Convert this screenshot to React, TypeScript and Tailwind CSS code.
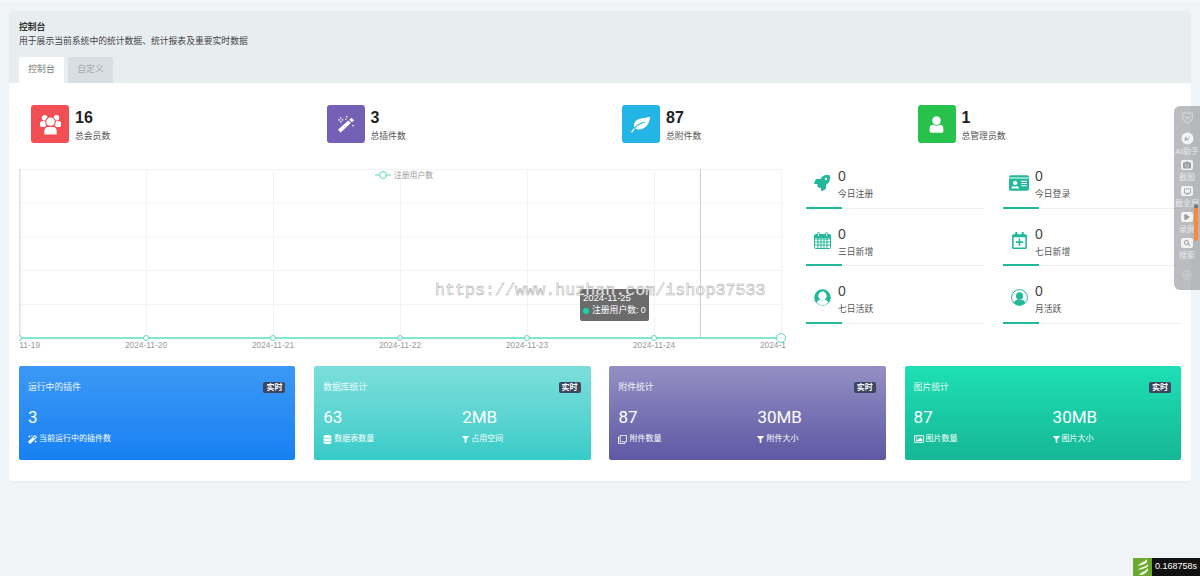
import React from "react";
import {
  FaMagic,
  FaRocket,
  FaIdCard,
  FaRegCalendarPlus,
  FaDatabase,
  FaFilter,
  FaRegClone,
  FaRegImage,
  FaCamera,
  FaDesktop,
  FaPlay,
  FaSearch,
} from "react-icons/fa";

const font = "font-['Liberation_Sans','Noto_Sans_CJK_SC',sans-serif]";

function UsersIcon() {
  return (
    <svg width="21" height="21" viewBox="0 0 20 20" fill="#fff">
      <circle cx="4.4" cy="3.6" r="2.7" />
      <circle cx="15.6" cy="3.6" r="2.7" />
      <rect x="0" y="6.8" width="6" height="5.6" rx="1.8" />
      <rect x="14" y="6.8" width="6" height="5.6" rx="1.8" />
      <circle cx="10" cy="7.4" r="4.6" stroke="#f44e55" strokeWidth="1" />
      <path d="M3.6 20 v-3.6 c0-3 2-4.6 3.6-4.6 h5.6 c1.6 0 3.6 1.6 3.6 4.6 V20 z" stroke="#f44e55" strokeWidth="1" />
    </svg>
  );
}

function WandIcon() {
  return (
    <svg width="18" height="18" viewBox="0 0 20 20" fill="#fff">
      <path d="M1 16.5 L12.6 6.2 L15.4 9 L4 19.5 Z" />
      <path d="M13.6 5.2 L16 3 L19 6 L16.4 8 Z" />
      <rect x="3.4" y="2.6" width="1.6" height="1.6" />
      <rect x="1.4" y="4.6" width="1.6" height="1.6" />
      <rect x="5.4" y="4.6" width="1.6" height="1.6" />
      <rect x="3.4" y="6.6" width="1.6" height="1.6" />
      <rect x="10" y="1" width="1.6" height="1.6" />
      <rect x="9" y="4" width="1.4" height="1.4" />
      <rect x="17" y="11" width="1.6" height="1.6" />
    </svg>
  );
}

function LeafIcon() {
  return (
    <svg width="20" height="17" viewBox="0 0 20 17" fill="#fff">
      <path d="M19.2 0.8 C13 2.6 6.4 1.6 3.6 6.6 C2.6 8.6 2.8 11.2 4.4 12.8 C11.4 15.4 18.4 10.6 19.2 0.8 Z" />
      <path d="M0.8 16 C4 10 8 7.4 13.6 6" fill="none" stroke="#22b5e6" strokeWidth="1.2" />
      <path d="M0.6 16.4 C1.4 15 2.2 13.8 3.2 12.6" fill="none" stroke="#fff" strokeWidth="1.4" />
    </svg>
  );
}

function UserIcon() {
  return (
    <svg width="15" height="17" viewBox="0 0 15 17" fill="#fff">
      <ellipse cx="7.5" cy="4.6" rx="4.2" ry="4.4" />
      <path d="M0.6 15 v-2.4 c0-2.4 1.6-3.6 3.4-3.8 c2 1.2 5 1.2 7 0 c1.8 0.2 3.4 1.4 3.4 3.8 V15 c0 1.2-1 1.8-2 1.8 H2.6 c-1 0-2-0.6-2-1.8 z" />
    </svg>
  );
}

function CalendarIcon() {
  const grid = [6.5, 9.5, 12.5];
  return (
    <svg width="17" height="17" viewBox="0 0 17 17" fill="none" stroke="currentColor">
      <rect x="0.5" y="2.5" width="16" height="14" rx="1" />
      <path d="M1 3 h15 v2.6 H1 z" fill="currentColor" />
      {grid.map((y) => (
        <line key={y} x1="1" x2="16" y1={y + 0.5} y2={y + 0.5} />
      ))}
      {[3.5, 6.5, 9.5, 12.5].map((x) => (
        <line key={x} x1={x + 0.5} x2={x + 0.5} y1="5" y2="16" />
      ))}
      <rect x="3.4" y="0.5" width="2" height="4" rx="1" fill="#fff" />
      <rect x="11.6" y="0.5" width="2" height="4" rx="1" fill="#fff" />
    </svg>
  );
}

function UserSolidCircle() {
  return (
    <svg width="17" height="17" viewBox="0 0 17 17">
      <circle cx="8.5" cy="8.5" r="8.3" fill="currentColor" />
      <ellipse cx="8.5" cy="7" rx="4.2" ry="4.4" fill="#fff" />
      <path d="M2.6 13.6 c1-2.2 3-2.8 3.6-2.8 c1.4 0.8 3.2 0.8 4.6 0 c0.6 0 2.6 0.6 3.6 2.8 c-1.4 1.6-3.4 2.6-5.9 2.6 s-4.5-1-5.9-2.6 z" fill="#fff" />
    </svg>
  );
}

function UserRingCircle() {
  return (
    <svg width="17" height="17" viewBox="0 0 17 17">
      <circle cx="8.5" cy="8.5" r="7.9" fill="#fff" stroke="currentColor" strokeWidth="1" />
      <ellipse cx="8.5" cy="7" rx="3.6" ry="3.8" fill="currentColor" />
      <path d="M3 13.8 c0.8-2.4 2.6-3 3.6-3 c1.2 0.6 2.6 0.6 3.8 0 c1 0 2.8 0.6 3.6 3 c-1.4 1.4-3.2 2.4-5.5 2.4 s-4.1-1-5.5-2.4 z" fill="currentColor" />
    </svg>
  );
}

const stats = [
  { value: "16", label: "总会员数", color: "bg-[#f44e55]", icon: <UsersIcon /> },
  { value: "3", label: "总插件数", color: "bg-[#7460b5]", icon: <WandIcon /> },
  { value: "87", label: "总附件数", color: "bg-[#22b5e6]", icon: <LeafIcon /> },
  { value: "1", label: "总管理员数", color: "bg-[#27c24c]", icon: <UserIcon /> },
];

const quick = [
  { label: "今日注册", icon: <FaRocket size={16} /> },
  { label: "今日登录", icon: <FaIdCard size={20} /> },
  { label: "三日新增", icon: <CalendarIcon /> },
  { label: "七日新增", icon: <FaRegCalendarPlus size={17} /> },
  { label: "七日活跃", icon: <UserSolidCircle /> },
  { label: "月活跃", icon: <UserRingCircle /> },
];

const cards = [
  {
    title: "运行中的插件",
    color: "from-[#3b98f5] to-[#1681f3]",
    items: [{ value: "3", label: "当前运行中的插件数", icon: <FaMagic size={9} /> }],
  },
  {
    title: "数据库统计",
    color: "from-[#7bdfdc] to-[#35cbc8]",
    items: [
      { value: "63", label: "数据表数量", icon: <FaDatabase size={9} /> },
      { value: "2MB", label: "占用空间", icon: <FaFilter size={7} /> },
    ],
  },
  {
    title: "附件统计",
    color: "from-[#9590c3] to-[#5f58a5]",
    items: [
      { value: "87", label: "附件数量", icon: <FaRegClone size={9} /> },
      { value: "30MB", label: "附件大小", icon: <FaFilter size={7} /> },
    ],
  },
  {
    title: "图片统计",
    color: "from-[#1ee0b5] to-[#16b796]",
    items: [
      { value: "87", label: "图片数量", icon: <FaRegImage size={10} /> },
      { value: "30MB", label: "图片大小", icon: <FaFilter size={7} /> },
    ],
  },
];

const tools = [
  { label: "截图", icon: <FaCamera size={8} /> },
  { label: "截全屏", icon: <FaDesktop size={7} /> },
  { label: "录屏", icon: <FaPlay size={6} /> },
  { label: "搜索", icon: <FaSearch size={6} /> },
];

function Chart() {
  const xs = [0, 127, 254, 381, 508, 635, 762];
  const ys = [0.5, 34, 68, 101.5, 135.5];
  const dates = ["2024-11-19", "2024-11-20", "2024-11-21", "2024-11-22", "2024-11-23", "2024-11-24", "2024-11-25"];
  return (
    <div className="relative w-[767px] shrink-0">
      <svg width="767" height="182" className="block">
        {ys.map((y) => (
          <line key={y} x1="0" x2="762" y1={y} y2={y} stroke="#f3f3f3" />
        ))}
        {xs.map((x) => (
          <line key={x} x1={x + 0.5} x2={x + 0.5} y1="0" y2="169" stroke="#f3f3f3" />
        ))}
        <line x1="0.5" x2="0.5" y1="0" y2="169" stroke="#e0e0e0" strokeWidth="2" />
        <line x1="681.5" x2="681.5" y1="0" y2="169" stroke="#cfcfcf" />
        <line x1="0" x2="762" y1="169" y2="169" stroke="#5adcc4" strokeWidth="1.5" />
        {xs.map((x, i) => (
          <circle key={x} cx={x} cy="169" r={i === 6 ? 4.5 : 2.5} fill="#fff" stroke="#5adcc4" strokeWidth="1" />
        ))}
        {dates.map((d, i) => (
          <text key={d} x={xs[i]} y="179" textAnchor="middle" fontSize="8.4" fill="#999" fontFamily="'Liberation Sans', sans-serif">
            {d}
          </text>
        ))}
        <line x1="356" x2="372" y1="6" y2="6" stroke="#5adcc4" strokeWidth="1.2" />
        <circle cx="364" cy="6" r="3.5" fill="#fff" stroke="#5adcc4" />
        <text x="375" y="9" fontSize="7.8" fill="#999" fontFamily="'Liberation Sans', 'Noto Sans CJK SC', sans-serif">
          注册用户数
        </text>
      </svg>
      <div className="absolute left-[561px] top-[120px] h-[32px] w-[69px] rounded-[2px] bg-[#6b6b6b] px-[3px] pt-[2px] leading-[13px] text-white">
        <div className="text-[9.5px]">2024-11-25</div>
        <div className="flex items-center gap-[3px] whitespace-nowrap text-[8.8px]">
          <span className="h-[6px] w-[6px] shrink-0 rounded-full bg-[#19d4ae]" />
          <span>注册用户数: 0</span>
        </div>
      </div>
    </div>
  );
}

function QuickCell({ label, icon }: { label: string; icon: React.ReactNode }) {
  return (
    <div className="flex h-[57.5px] flex-col justify-end">
      <div className="flex flex-1 items-start pt-[16px]">
        <div className="flex h-[30px] w-[32px] shrink-0 items-center justify-center pt-[1px] text-[#22b89a]">{icon}</div>
        <div>
          <div className="text-[14px] leading-[18px] text-[#444]">0</div>
          <div className="mt-[2px] text-[8.8px] leading-[14px] text-[#555]">{label}</div>
        </div>
      </div>
      <div className="flex h-[2px] items-end">
        <div className="h-[2px] w-[36px] bg-[#22b89a]" />
        <div className="h-[1px] flex-1 bg-[#f0f0f0]" />
      </div>
    </div>
  );
}

function ToolSquare({ children }: { children: React.ReactNode }) {
  return (
    <div className="mt-[2px] flex h-[10px] w-[12px] items-center justify-center rounded-[2px] bg-white/80 text-[#9a9b9e]">
      {children}
    </div>
  );
}

export default function App() {
  return (
    <div className={`relative h-[576px] w-[1200px] overflow-hidden bg-[#f1f4f6] ${font}`}>
      <div className="h-[2px] bg-[#f7f7f7]" />
      <div className="mx-[9px] mt-[9px] w-[1182px] overflow-hidden rounded-[3px] bg-white shadow-[0_1px_2px_rgba(0,0,0,0.04)]">
        <div className="h-[72px] bg-[#e8edf0] px-[10px] pt-[9px]">
          <div className="text-[8.8px] font-bold leading-[15px] text-[#333]">控制台</div>
          <div className="text-[8.8px] leading-[13px] text-[#444]">用于展示当前系统中的统计数据、统计报表及重要实时数据</div>
          <div className="mt-[9px] flex gap-[4px] text-[8.8px]">
            <div className="flex h-[26px] w-[45px] items-center justify-center rounded-t-[2px] bg-white text-[#777]">控制台</div>
            <div className="flex h-[26px] w-[45px] items-center justify-center rounded-t-[2px] bg-[#d8dfe4] text-[#aaa]">自定义</div>
          </div>
        </div>

        <div className="px-[10px] pb-[21px] pt-[22px]">
          <div className="ml-[12px] flex w-[1182px]">
            {stats.map((s) => (
              <div key={s.label} className="flex w-[295.5px] items-center gap-[6px]">
                <div className={`flex h-[38px] w-[38px] items-center justify-center rounded-[3px] text-white ${s.color}`}>
                  {s.icon}
                </div>
                <div className="pt-[2px]">
                  <div className="text-[16px] font-bold leading-[21px] text-[#222]">{s.value}</div>
                  <div className="mt-[1px] text-[8.8px] leading-[14px] text-[#555]">{s.label}</div>
                </div>
              </div>
            ))}
          </div>

          <div className="mt-[26px] flex h-[182px]">
            <Chart />
            <div className="ml-[20px] mt-[-18px] grid flex-1 grid-cols-2 content-start gap-x-[19px]">
              {quick.map((q) => (
                <QuickCell key={q.label} label={q.label} icon={q.icon} />
              ))}
            </div>
          </div>

          <div className="mt-[15px] grid grid-cols-4 gap-x-[18.8px]">
            {cards.map((c) => (
              <div key={c.title} className={`h-[94px] rounded-[2px] bg-gradient-to-b pl-[9px] pr-[10px] pt-[15px] text-white ${c.color}`}>
                <div className="flex items-center justify-between">
                  <span className="text-[8.8px] leading-[12px] opacity-90">{c.title}</span>
                  <span className="rounded-[2px] bg-[#3b4660] px-[3px] text-[8px] font-bold leading-[11px]">实时</span>
                </div>
                <div className="mt-[12px] grid grid-cols-[139px_1fr]">
                  {c.items.map((it) => (
                    <div key={it.label}>
                      <div className="font-['Roboto',sans-serif] text-[17px] leading-[24px]">{it.value}</div>
                      <div className="mt-[4px] flex items-center gap-[2px] text-[8px] leading-[12px]">
                        {it.icon}
                        <span>{it.label}</span>
                      </div>
                    </div>
                  ))}
                </div>
              </div>
            ))}
          </div>
        </div>
      </div>

      {/* watermark over the chart */}
      <div className="absolute left-[435px] top-[281px] font-['Liberation_Mono',monospace] text-[16.7px] leading-[20px] text-white [-webkit-text-stroke:0.5px_#a5a5a5]">
        https://www.huzhan.com/ishop37533
      </div>

      {/* browser side toolbar */}
      <div className="absolute left-[1174px] top-[106px] flex h-[184px] w-[26px] flex-col items-center rounded-l-[6px] bg-[#8e9095]/60 pt-[5px] text-[8px] leading-[12px] text-white/65">
        <svg width="13" height="13" viewBox="0 0 24 24" fill="none" stroke="#fff" strokeOpacity="0.35" strokeWidth="2.5">
          <path d="M3 4h18v8c0 5-5 8-9 10-4-2-9-5-9-10z" />
          <path d="M7 10l5 4 5-4" />
        </svg>
        <svg width="13" height="13" viewBox="0 0 24 24" className="mt-[8px]">
          <circle cx="12" cy="12" r="11" fill="#fff" fillOpacity="0.85" />
          <path d="M7 16c5 1 9-3 9-9-1 4-4 6-7 6 2-2 2-4 1-5-3 2-4 5-3 8z" fill="#a5a6a9" />
        </svg>
        <div className="mt-[1px]">AI助手</div>
        {tools.map((t) => (
          <React.Fragment key={t.label}>
            <ToolSquare>{t.icon}</ToolSquare>
            <div className="mt-[2px] whitespace-nowrap">{t.label}</div>
          </React.Fragment>
        ))}
        <svg width="10" height="10" viewBox="0 0 24 24" fill="none" stroke="#fff" strokeOpacity="0.3" strokeWidth="2.5" className="mt-[8px]">
          <circle cx="12" cy="12" r="10" />
          <circle cx="12" cy="12" r="4" />
        </svg>
      </div>
      <div className="absolute left-[1194px] top-[204px] h-[37px] w-[4px] rounded-full bg-gradient-to-b from-[#777] from-[12%] to-[#f58a38] to-[12%]" />

      {/* page timer badge */}
      <div className="absolute bottom-0 right-0 flex h-[18px] items-stretch">
        <div className="flex w-[19px] items-center justify-center bg-[#6aa92c]">
          <svg width="14" height="16" viewBox="0 0 14 16" fill="#fff" fillOpacity="0.9">
            <path d="M11 0C9 3 3 4 2 7c2-1 7-1 9-4z" />
            <path d="M12 5C10 8 4 8 2 11c3-1 8-1 10-4z" />
            <path d="M12 9c-2 3-7 4-9 7h3c3-1 5-3 6-5z" />
          </svg>
        </div>
        <div className="flex w-[48px] items-center justify-center bg-[#111] text-[9px] text-white">0.168758s</div>
      </div>
    </div>
  );
}
